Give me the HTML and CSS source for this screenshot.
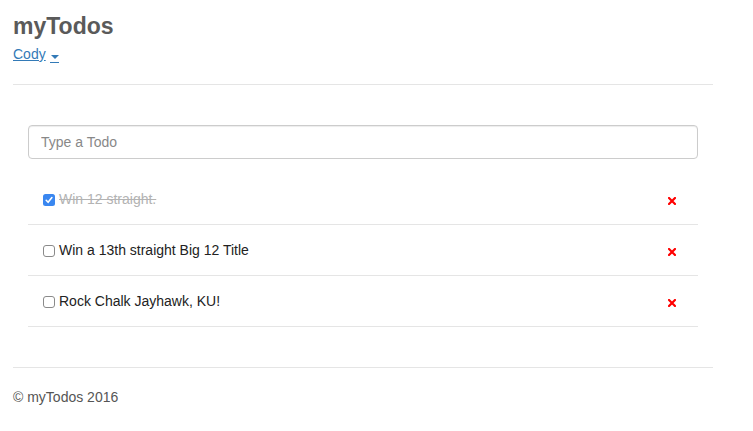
FILE: index.html
```html
<!DOCTYPE html>
<html>
<head>
<meta charset="utf-8">
<title>myTodos</title>
<link rel="stylesheet" href="styles.css">
</head>
<body>
<div class="page">
  <header class="header">
    <h1 class="brand">myTodos</h1>
    <a class="user" href="#"><span class="user-name">Cody</span> <span class="caret-u"><span class="caret"></span></span></a>
  </header>
  <main class="main">
    <input class="todo-input" type="text" placeholder="Type a Todo">
    <ul class="todos">
      <li class="todo">
        <span class="check checked"><svg width="12" height="12" viewBox="0 0 12 12"><rect x="0" y="0" width="12" height="12" rx="2.5" fill="#3a87f0"/><path d="M3.2 6.3 L5.1 8.3 L8.9 3.6" fill="none" stroke="#fff" stroke-width="1.6" stroke-linecap="round" stroke-linejoin="round"/></svg></span>
        <span class="text done">Win 12 straight.</span>
        <span class="remove"><svg width="8" height="8" viewBox="0 0 8 8"><path d="M1 1 L7 7 M7 1 L1 7" stroke="#f00" stroke-width="2.2" stroke-linecap="square"/></svg></span>
      </li>
      <li class="todo">
        <span class="check"><svg width="12" height="12" viewBox="0 0 12 12"><rect x="0.5" y="0.5" width="11" height="11" rx="2.5" fill="#fff" stroke="#8a8a8a"/></svg></span>
        <span class="text">Win a 13th straight Big 12 Title</span>
        <span class="remove"><svg width="8" height="8" viewBox="0 0 8 8"><path d="M1 1 L7 7 M7 1 L1 7" stroke="#f00" stroke-width="2.2" stroke-linecap="square"/></svg></span>
      </li>
      <li class="todo">
        <span class="check"><svg width="12" height="12" viewBox="0 0 12 12"><rect x="0.5" y="0.5" width="11" height="11" rx="2.5" fill="#fff" stroke="#8a8a8a"/></svg></span>
        <span class="text">Rock Chalk Jayhawk, KU!</span>
        <span class="remove"><svg width="8" height="8" viewBox="0 0 8 8"><path d="M1 1 L7 7 M7 1 L1 7" stroke="#f00" stroke-width="2.2" stroke-linecap="square"/></svg></span>
      </li>
    </ul>
  </main>
  <footer class="footer">© myTodos 2016</footer>
</div>
</body>
</html>
```
FILE: styles.css
```css
html, body {
  margin: 0;
  padding: 0;
  background: #fff;
}
body {
  font-family: "Liberation Sans", Arial, sans-serif;
  font-size: 14px;
  line-height: 20px;
  color: #333;
}
.page {
  width: 700px;
  padding: 0 13px;
}
.header {
  padding-top: 13px;
  padding-bottom: 20px;
  border-bottom: 1px solid #e5e5e5;
}
.brand {
  margin: 0 0 5px 0;
  font-size: 23px;
  line-height: 26px;
  font-weight: bold;
  color: #5a5a5a;
}
.user {
  color: #337ab7;
  text-decoration: none;
  font-size: 14px;
  line-height: 20px;
}
.user-name {
  text-decoration: underline;
}
.caret-u {
  display: inline-block;
  width: 9px;
  padding-bottom: 3px;
  border-bottom: 1px solid #337ab7;
  vertical-align: -4px;
  line-height: 0;
}
.caret {
  display: block;
  width: 0;
  height: 0;
  margin-left: 1px;
  border-top: 4px solid #337ab7;
  border-left: 4px solid transparent;
  border-right: 4px solid transparent;
}
.main {
  padding: 40px 15px 40px 15px;
  border-bottom: 1px solid #e5e5e5;
}
.todo-input {
  display: block;
  box-sizing: border-box;
  width: 100%;
  height: 34px;
  margin: 0;
  padding: 6px 12px;
  font-family: "Liberation Sans", Arial, sans-serif;
  font-size: 14px;
  color: #555;
  border: 1px solid #ccc;
  border-radius: 4px;
  box-shadow: inset 0 1px 1px rgba(0,0,0,0.075);
  outline: none;
}
.todo-input::placeholder {
  color: #888;
}
.todos {
  list-style: none;
  margin: 15px 0 0 0;
  padding: 0;
}
.todo {
  display: flex;
  align-items: center;
  height: 50px;
  padding: 0 22px 0 15px;
  border-bottom: 1px solid #e5e5e5;
}
.check {
  display: inline-flex;
  width: 12px;
  height: 12px;
  margin-right: 4px;
  margin-top: 1px;
}
.text {
  flex: 1;
  color: #222;
}
.text.done {
  color: #b3b3b3;
  text-decoration: line-through;
}
.remove {
  display: inline-flex;
  width: 8px;
  height: 8px;
  margin-top: 3px;
}
.footer {
  padding: 19px 0;
  color: #555;
}
```
